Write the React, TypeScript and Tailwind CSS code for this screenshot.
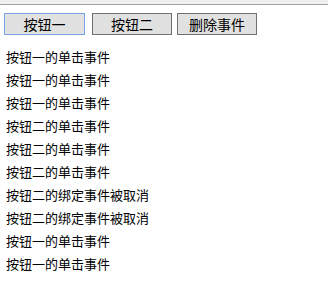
const logs = [
  "按钮一的单击事件",
  "按钮一的单击事件",
  "按钮一的单击事件",
  "按钮二的单击事件",
  "按钮二的单击事件",
  "按钮二的单击事件",
  "按钮二的绑定事件被取消",
  "按钮二的绑定事件被取消",
  "按钮一的单击事件",
  "按钮一的单击事件",
]

const font = { fontFamily: '"Noto Sans CJK SC", sans-serif' }

export default function App() {
  return (
    <div className="w-[328px] h-[292px] bg-white text-black" style={font}>
      <div className="h-[4px] bg-[#f0f0f0]" />
      <div className="h-px bg-[#a0a0a0]" />
      <div className="flex pl-[4px] pt-[8px]">
        <button className="w-[81px] h-[22px] border border-[#7aa3e8] bg-[#e1e1e1] text-[14px] leading-none">
          按钮一
        </button>
        <button className="ml-[7px] w-[80px] h-[22px] border border-[#707070] bg-[#e1e1e1] text-[14px] leading-none">
          按钮二
        </button>
        <button className="ml-[5px] w-[80px] h-[22px] border border-[#707070] bg-[#e1e1e1] text-[14px] leading-none">
          删除事件
        </button>
      </div>
      <div className="pl-[6px] pt-[10px]">
        {logs.map((text, i) => (
          <div key={i} className="h-[23px] text-[13px] leading-[23px]">
            {text}
          </div>
        ))}
      </div>
    </div>
  )
}
